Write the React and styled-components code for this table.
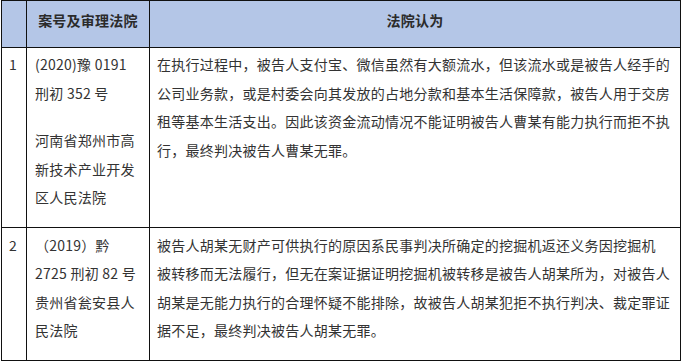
import React from "react"
import styled, { createGlobalStyle } from "styled-components"

const GlobalStyle = createGlobalStyle`
  html, body {
    margin: 0;
    padding: 0;
    background: #ffffff;
  }
  body {
    font-family: "Noto Sans CJK SC", "Liberation Sans", sans-serif;
    color: #333333;
  }
`

const Table = styled.div`
  display: grid;
  grid-template-columns: 25px 123px 531px;
  width: fit-content;
  margin-left: 1px;
  border-top: 1px solid #111;
  border-left: 1px solid #111;
  font-size: 14px;
  letter-spacing: 0.25px;
  line-height: 28.5px;
`

const HeadCell = styled.div`
  background: #b4c6e7;
  border-right: 1px solid #111;
  border-bottom: 1px solid #111;
  height: 47px;
  padding-top: 5px;
  box-sizing: border-box;
  text-align: center;
  font-weight: 700;
  line-height: 28px;
  color: #2b2b2b;
`

const Cell = styled.div`
  border-right: 1px solid #111;
  border-bottom: 1px solid #111;
  padding: ${({ $top }) => $top}px 6px 15px ${({ $left }) => $left}px;
  box-sizing: border-box;
  min-width: 0;
`

const Para = styled.div`
  & + & {
    margin-top: 19px;
  }
`

const Line = styled.div`
  white-space: nowrap;
`

const rows = [
  {
    no: "1",
    top: 2,
    court: [
      ["(2020)豫 0191", "刑初 352 号"],
      ["河南省郑州市高", "新技术产业开发", "区人民法院"],
    ],
    opinion: [
      "在执行过程中，被告人支付宝、微信虽然有大额流水，但该流水或是被告人经手的",
      "公司业务款，或是村委会向其发放的占地分款和基本生活保障款，被告人用于交房",
      "租等基本生活支出。因此该资金流动情况不能证明被告人曹某有能力执行而拒不执",
      "行，最终判决被告人曹某无罪。",
    ],
  },
  {
    no: "2",
    top: 3,
    court: [["（2019）黔", "2725 刑初 82 号", "贵州省瓮安县人", "民法院"]],
    opinion: [
      "被告人胡某无财产可供执行的原因系民事判决所确定的挖掘机返还义务因挖掘机",
      "被转移而无法履行，但无在案证据证明挖掘机被转移是被告人胡某所为，对被告人",
      "胡某是无能力执行的合理怀疑不能排除，故被告人胡某犯拒不执行判决、裁定罪证",
      "据不足，最终判决被告人胡某无罪。",
    ],
  },
]

export default function App() {
  return (
    <>
      <GlobalStyle />
      <Table>
        <HeadCell />
        <HeadCell>案号及审理法院</HeadCell>
        <HeadCell>法院认为</HeadCell>

        {rows.map((row) => (
          <React.Fragment key={row.no}>
            <Cell $top={row.top} $left={7}>
              <Line>{row.no}</Line>
            </Cell>
            <Cell $top={row.top} $left={8}>
              {row.court.map((para, i) => (
                <Para key={i}>
                  {para.map((text) => (
                    <Line key={text}>{text}</Line>
                  ))}
                </Para>
              ))}
            </Cell>
            <Cell $top={row.top} $left={7}>
              {row.opinion.map((text) => (
                <Line key={text}>{text}</Line>
              ))}
            </Cell>
          </React.Fragment>
        ))}
      </Table>
    </>
  )
}
